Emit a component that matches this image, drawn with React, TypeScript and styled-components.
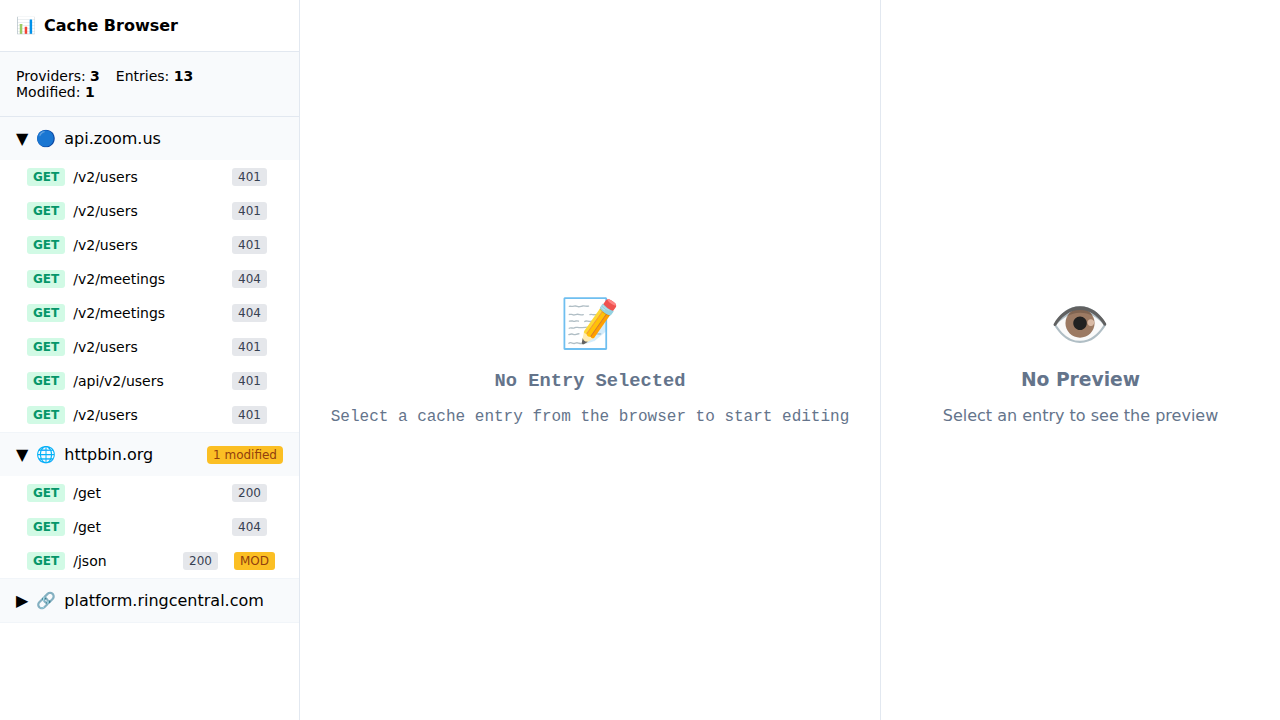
import React from "react";
import styled, { createGlobalStyle } from "styled-components";

const GlobalStyle = createGlobalStyle`
  html, body { margin: 0; padding: 0; height: 100%; background: white; }
  body {
    font-family: "DejaVu Sans", sans-serif;
    color: #000;
    overflow: hidden;
  }
`;

const Page = styled.div`
  display: flex;
  height: 720px;
  width: 1280px;
`;

const Sidebar = styled.aside`
  border-right: 1px solid #e2e8f0;
  box-sizing: border-box;
  display: flex;
  flex-direction: column;
  flex-shrink: 0;
  width: 300px;
`;

const Header = styled.div`
  border-bottom: 1px solid #e2e8f0;
  padding: 16px;
`;

const Title = styled.h2`
  font-size: 16px;
  font-weight: 700;
  line-height: 19px;
  margin: 0;
`;

const Stats = styled.div`
  background: #f8fafc;
  border-bottom: 1px solid #e2e8f0;
  font-size: 14px;
  line-height: 16px;
  padding: 16px;
`;

const Stat = styled.span`
  margin-right: 16px;
`;

const Group = styled.div`
  border-bottom: 1px solid #f1f5f9;
`;

const GroupHeader = styled.div`
  align-items: center;
  background: #f8fafc;
  display: flex;
  font-size: 16px;
  height: 43px;
  justify-content: space-between;
  padding: 0 16px;
`;

const GroupName = styled.span`
  white-space: nowrap;
`;

const Glyph = styled.span`
  margin-right: 8px;
`;

const ModifiedTag = styled.span`
  background: #fbbf24;
  border-radius: 4px;
  color: #92400e;
  font-size: 12px;
  line-height: 14px;
  padding: 2px 6px;
`;

const Row = styled.div`
  align-items: center;
  display: flex;
  font-size: 14px;
  height: 34px;
  padding: 0 32px 0 27px;
`;

const Method = styled.span`
  background: #d1fae5;
  border-radius: 3px;
  color: #059669;
  font-size: 12px;
  font-weight: 700;
  line-height: 14px;
  margin-right: 8px;
  padding: 2px 6px;
`;

const Path = styled.span`
  flex: 1;
`;

const Status = styled.span`
  background: #e5e7eb;
  border-radius: 3px;
  color: #374151;
  font-size: 12px;
  line-height: 14px;
  padding: 2px 6px;
`;

const Mod = styled.span`
  background: #fbbf24;
  border-radius: 3px;
  color: #92400e;
  font-size: 12px;
  line-height: 14px;
  margin-left: 16px;
  margin-right: -8px;
  padding: 2px 6px;
`;

const Panel = styled.main<{ $mono?: boolean }>`
  align-items: center;
  box-sizing: border-box;
  color: #64748b;
  display: flex;
  font-family: ${(p) =>
    p.$mono ? '"Liberation Mono", monospace' : '"DejaVu Sans", sans-serif'};
  justify-content: center;
`;

const EditorPanel = styled(Panel)`
  border-right: 1px solid #e2e8f0;
  flex-shrink: 0;
  width: 581px;
`;

const PreviewPanel = styled(Panel)`
  flex: 1;
`;

const EmptyState = styled.div`
  text-align: center;
`;

const BigIcon = styled.div`
  font-size: 48px;
  margin-bottom: 16px;
`;

const EmptyTitle = styled.h3`
  font-size: 18.72px;
  font-weight: 700;
  margin: 0 0 16px;
`;

const EmptyText = styled.p`
  font-size: 16px;
  margin: 0;
`;

type Entry = { path: string; status: number; mod?: boolean };

const zoom: Entry[] = [
  { path: "/v2/users", status: 401 },
  { path: "/v2/users", status: 401 },
  { path: "/v2/users", status: 401 },
  { path: "/v2/meetings", status: 404 },
  { path: "/v2/meetings", status: 404 },
  { path: "/v2/users", status: 401 },
  { path: "/api/v2/users", status: 401 },
  { path: "/v2/users", status: 401 },
];

const httpbin: Entry[] = [
  { path: "/get", status: 200 },
  { path: "/get", status: 404 },
  { path: "/json", status: 200, mod: true },
];

function Rows({ entries }: { entries: Entry[] }) {
  return (
    <>
      {entries.map((e, i) => (
        <Row key={i}>
          <Method>GET</Method>
          <Path>{e.path}</Path>
          <Status>{e.status}</Status>
          {e.mod && <Mod>MOD</Mod>}
        </Row>
      ))}
    </>
  );
}

export default function App() {
  return (
    <Page>
      <GlobalStyle />
      <Sidebar>
        <Header>
          <Title>
            <Glyph>📊</Glyph>
            Cache Browser
          </Title>
        </Header>
        <Stats>
          <Stat>
            Providers: <b>3</b>
          </Stat>
          <Stat>
            Entries: <b>13</b>
          </Stat>
          <br />
          Modified: <b>1</b>
        </Stats>
        <Group>
          <GroupHeader>
            <GroupName>
              <Glyph>▼</Glyph>
              <Glyph>🔵</Glyph>
              api.zoom.us
            </GroupName>
          </GroupHeader>
          <Rows entries={zoom} />
        </Group>
        <Group>
          <GroupHeader>
            <GroupName>
              <Glyph>▼</Glyph>
              <Glyph>🌐</Glyph>
              httpbin.org
            </GroupName>
            <ModifiedTag>1 modified</ModifiedTag>
          </GroupHeader>
          <Rows entries={httpbin} />
        </Group>
        <Group>
          <GroupHeader>
            <GroupName>
              <Glyph>▶</Glyph>
              <Glyph>🔗</Glyph>
              platform.ringcentral.com
            </GroupName>
          </GroupHeader>
        </Group>
      </Sidebar>
      <EditorPanel $mono>
        <EmptyState>
          <BigIcon>📝</BigIcon>
          <EmptyTitle>No Entry Selected</EmptyTitle>
          <EmptyText>Select a cache entry from the browser to start editing</EmptyText>
        </EmptyState>
      </EditorPanel>
      <PreviewPanel>
        <EmptyState>
          <BigIcon>👁️</BigIcon>
          <EmptyTitle>No Preview</EmptyTitle>
          <EmptyText>Select an entry to see the preview</EmptyText>
        </EmptyState>
      </PreviewPanel>
    </Page>
  );
}
